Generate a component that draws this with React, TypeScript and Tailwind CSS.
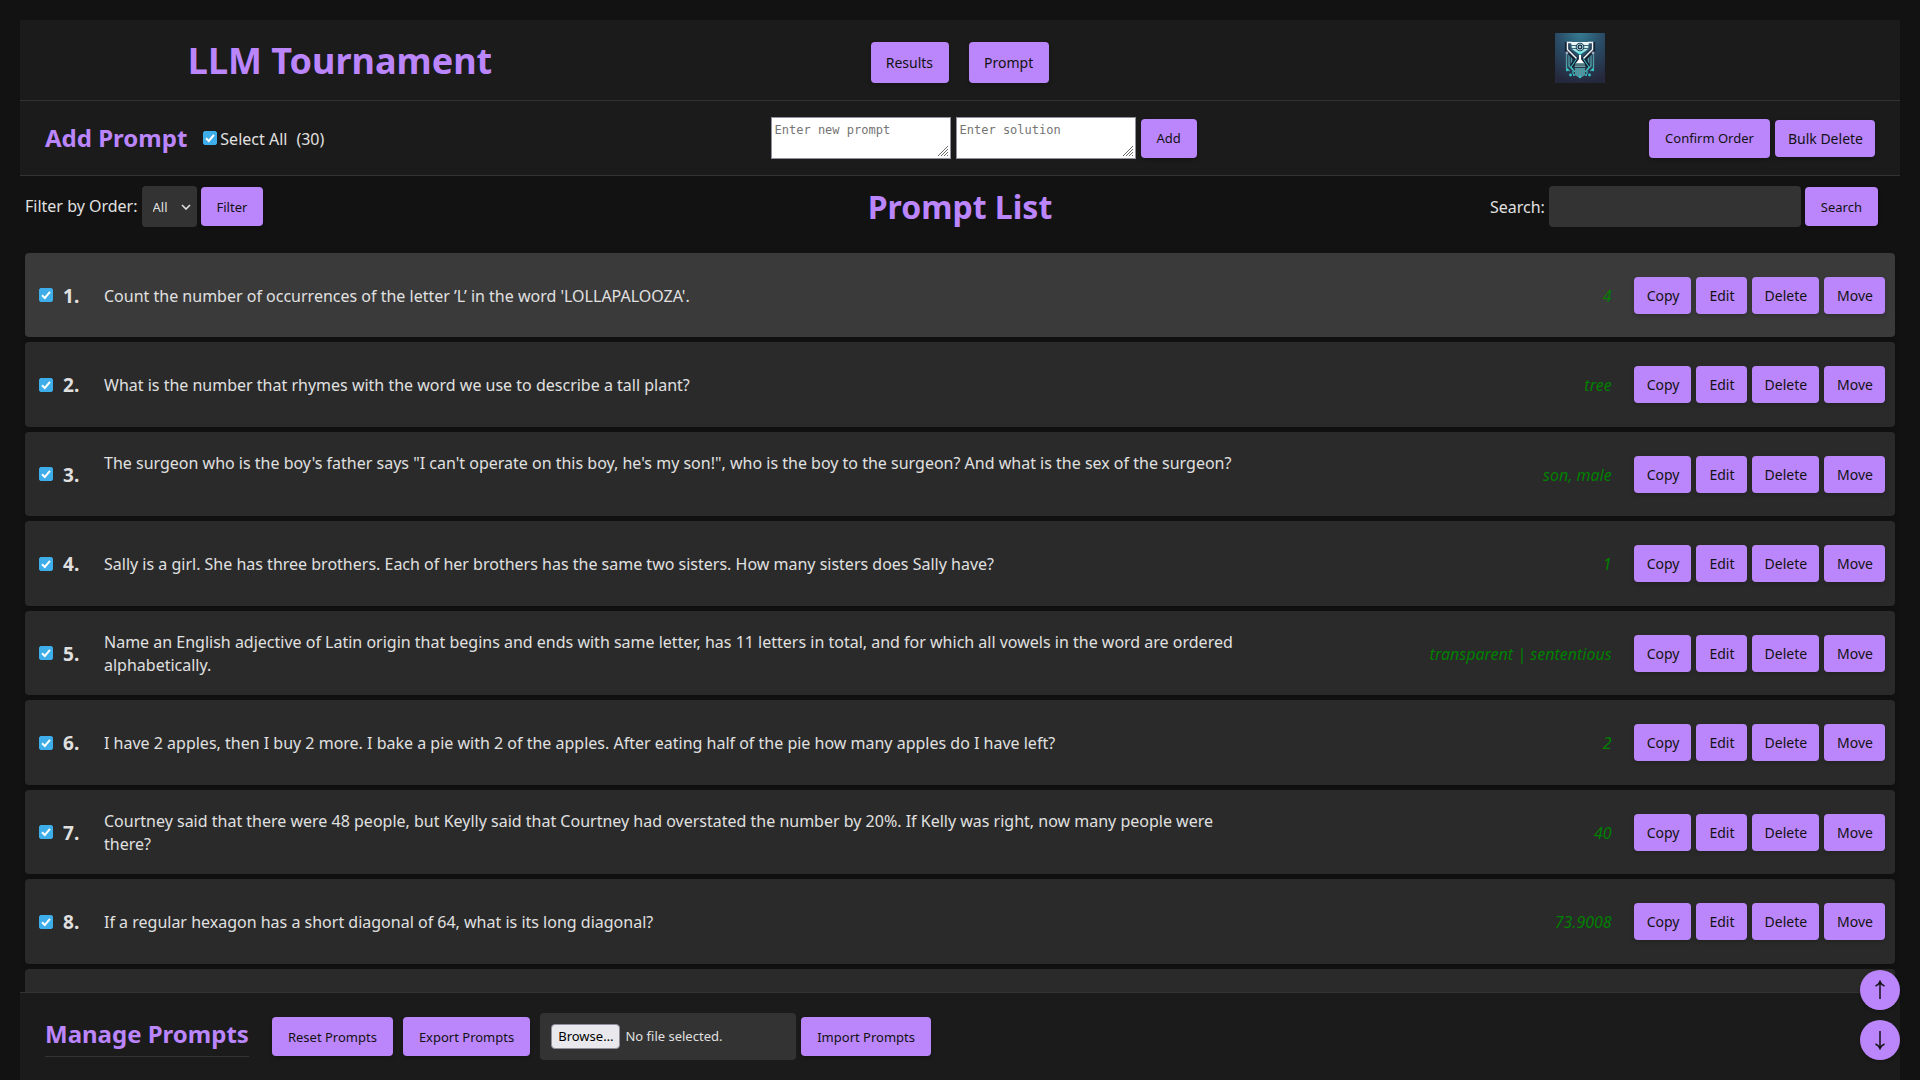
import React from "react";

type Prompt = { text: string; answer: string };

const prompts: Prompt[] = [
  { text: "Count the number of occurrences of the letter ’L’ in the word 'LOLLAPALOOZA'.", answer: "4" },
  { text: "What is the number that rhymes with the word we use to describe a tall plant?", answer: "tree" },
  {
    text: "The surgeon who is the boy's father says \"I can't operate on this boy, he's my son!\", who is the boy to the surgeon? And what is the sex of the surgeon?\n\u00a0",
    answer: "son, male",
  },
  {
    text: "Sally is a girl. She has three brothers. Each of her brothers has the same two sisters. How many sisters does Sally have?",
    answer: "1",
  },
  {
    text: "Name an English adjective of Latin origin that begins and ends with same letter, has 11 letters in total, and for which all vowels in the word are ordered alphabetically.",
    answer: "transparent | sententious",
  },
  {
    text: "I have 2 apples, then I buy 2 more. I bake a pie with 2 of the apples. After eating half of the pie how many apples do I have left?",
    answer: "2",
  },
  {
    text: "Courtney said that there were 48 people, but Keylly said that Courtney had overstated the number by 20%. If Kelly was right, now many people were there?",
    answer: "40",
  },
  { text: "If a regular hexagon has a short diagonal of 64, what is its long diagonal?", answer: "73.9008" },
];

const base =
  "rounded-[4px] bg-[#bb86fc] text-[#121212] whitespace-nowrap shadow-[0_2px_4px_rgba(0,0,0,0.2)] cursor-pointer";

function SmallButton({ children }: { children: React.ReactNode }) {
  return (
    <button type="button" className={`${base} h-[39px] px-4 pt-px text-[13px]`}>
      {children}
    </button>
  );
}

function RowButton({ children }: { children: React.ReactNode }) {
  return (
    <button type="button" className={`${base} h-[37px] pr-3 pl-[13px] text-[14px]`}>
      {children}
    </button>
  );
}

function NavLink({ children }: { children: React.ReactNode }) {
  return (
    <a href="#" className={`${base} flex h-[41px] items-center pr-4 pl-[15px] text-[14px]`}>
      {children}
    </a>
  );
}

function Checkbox({ id, label }: { id: string; label?: string }) {
  return (
    <span className="grid size-[14px] shrink-0">
      <input
        id={id}
        type="checkbox"
        defaultChecked
        aria-label={label}
        className="peer col-start-1 row-start-1 size-[14px] appearance-none rounded-[2px] border border-[#3daee9] checked:bg-[#3daee9]"
      />
      <svg
        viewBox="0 0 14 14"
        className="pointer-events-none col-start-1 row-start-1 hidden size-[14px] peer-checked:block"
        fill="none"
        stroke="#fff"
        strokeWidth="2"
      >
        <path d="M3 7.2 5.8 10 11 3.8" />
      </svg>
    </span>
  );
}

function Area({ placeholder }: { placeholder: string }) {
  return (
    <span className="grid">
      <textarea
        aria-label={placeholder}
        placeholder={placeholder}
        className="col-start-1 row-start-1 h-[42px] w-[180px] resize-none border border-[#8f8f9d] bg-white px-[3px] py-1 font-['DejaVu_Sans_Mono',monospace] text-[12px] leading-4 text-black placeholder:text-[#757575]"
      />
      <svg
        viewBox="0 0 12 12"
        className="pointer-events-none col-start-1 row-start-1 mr-[2px] mb-[2px] size-3 self-end justify-self-end"
        stroke="#6a6a6a"
        strokeWidth="1"
      >
        <path d="M1 11 11 1M4 11 11 4M7 11 11 7M10 11 11 10" />
      </svg>
    </span>
  );
}

function Logo() {
  return (
    <svg viewBox="0 0 50 50" className="size-[50px]" role="img" aria-label="LLM Tournament logo" fill="none">
      <defs>
        <radialGradient id="lg-bg" cx="25" cy="0" r="50" gradientUnits="userSpaceOnUse">
          <stop offset="0" stopColor="#357c92" />
          <stop offset="0.45" stopColor="#2a4c66" />
          <stop offset="1" stopColor="#25283c" />
        </radialGradient>
        <linearGradient id="lg-side" x1="0" y1="16" x2="0" y2="44" gradientUnits="userSpaceOnUse">
          <stop offset="0" stopColor="#5b7f92" />
          <stop offset="0.5" stopColor="#4f9fa2" />
          <stop offset="1" stopColor="#2fc0c2" />
        </linearGradient>
        <linearGradient id="lg-cup" x1="0" y1="9" x2="0" y2="23" gradientUnits="userSpaceOnUse">
          <stop offset="0" stopColor="#f4fbfb" />
          <stop offset="0.45" stopColor="#c4eeee" />
          <stop offset="1" stopColor="#25d5d8" />
        </linearGradient>
      </defs>
      <rect width="50" height="50" fill="url(#lg-bg)" />
      <path d="M11 6.5h6M33 6.5h6" stroke="#27607a" strokeWidth="2" />
      <path
        d="M11.500 21v14l3 3M14 22v11l4 4v4M16.500 24v7l-2 2M38.500 21v14l-3 3M36 22v11l-4 4v4M33.500 24v7l2 2"
        stroke="url(#lg-side)"
        strokeWidth="1.300"
      />
      <path d="M12 9v8l9.500 9.500-5 7M38 9v8l-9.500 9.500 5 7" stroke="#152436" strokeWidth="4.500" />
      <path d="M16 9h18l-1 7-8 6-8-6z" fill="url(#lg-cup)" />
      <path d="M16 12.500h18M17 15.500h16" stroke="#2b4258" strokeWidth="0.800" />
      <circle cx="25" cy="14" r="4.300" fill="#20384e" />
      <circle cx="25" cy="14" r="3" stroke="#9fd0d8" strokeWidth="1" />
      <circle cx="25" cy="14" r="1" fill="#d9f3f5" />
      <path d="M17 9.500h-4.500v7l9 9M33 9.500h4.500v7l-9 9" stroke="#f2f8fa" strokeWidth="1.500" />
      <path d="M21.500 26l-5.500 8 4 5M28.500 26l5.500 8-4 5" stroke="#3fc9cb" strokeWidth="1" />
      <path d="M24 22h2v4l3 4h-8l3-4z" fill="#fff" />
      <path d="M20.500 30h9l1 4h-11z" fill="#6b98a0" />
      <path d="M20 32h10" stroke="#38525f" />
      <path d="M20 35h10v7l-3 2h-4l-3-2z" fill="#5f8f99" />
      <path d="M21.500 35v7M23.500 35v9M26.500 35v9M28.500 35v7" stroke="#35a0a6" strokeWidth="0.800" />
      <g fill="#35c4c8">
        <circle cx="12" cy="37" r="1.200" />
        <circle cx="15.500" cy="42" r="1.400" />
        <circle cx="19" cy="42" r="1.100" />
        <circle cx="25" cy="44" r="1.300" />
        <circle cx="31" cy="42" r="1.100" />
        <circle cx="34.500" cy="42" r="1.400" />
        <circle cx="38" cy="37" r="1.200" />
      </g>
      <circle cx="12" cy="20" r="1.400" fill="#9aa9b8" />
      <circle cx="38" cy="20" r="1.400" fill="#9aa9b8" />
    </svg>
  );
}

function ScrollButton({ label, d }: { label: string; d: string }) {
  return (
    <button
      type="button"
      aria-label={label}
      className="grid size-10 place-items-center rounded-full bg-[#bb86fc] text-[#121212] shadow-[0_2px_4px_rgba(0,0,0,0.2)]"
    >
      <svg viewBox="0 0 12 20" className="h-5 w-3" fill="none" stroke="currentColor">
        <path d={d} strokeWidth="1.500" />
      </svg>
    </button>
  );
}

export default function App() {
  return (
    <div className="flex h-screen flex-col overflow-hidden bg-[#121212] px-5 pt-5 font-['Noto_Sans',sans-serif] text-[16px] leading-[23px] text-[#e0e0e0]">
      <header className="grid grid-cols-3 items-end justify-items-center border-b border-[#333] bg-[#1b1b1b] px-[10px] pt-[13px] pb-[17px]">
        <h1 className="text-[36px] leading-[44px] font-bold text-[#bb86fc]">LLM Tournament</h1>
        <nav className="flex gap-5">
          <NavLink>Results</NavLink>
          <NavLink>Prompt</NavLink>
        </nav>
        <Logo />
      </header>

      <section className="flex items-center justify-between border-b border-[#333] bg-[#1b1b1b] px-[25px] py-4">
        <div className="flex items-center">
          <h2 className="text-[24px] leading-8 font-bold text-[#bb86fc]">Add Prompt</h2>
          <span className="ml-4 flex items-center gap-[3px]">
            <Checkbox id="select-all" />
            <label htmlFor="select-all" className="pt-[2px]">
              Select All
            </label>
          </span>
          <span className="ml-[9px] pt-[2px]">(30)</span>
        </div>
        <form className="mr-[6px] flex items-center gap-[5px]">
          <Area placeholder="Enter new prompt" />
          <Area placeholder="Enter solution" />
          <SmallButton>Add</SmallButton>
        </form>
        <div className="flex items-center gap-[5px]">
          <SmallButton>Confirm Order</SmallButton>
          <RowButton>Bulk Delete</RowButton>
        </div>
      </section>

      <section className="grid grid-cols-[1fr_auto_1fr] items-center px-[5px] pt-[10px] pb-[26px]">
        <form className="flex items-center gap-1">
          <label htmlFor="order">Filter by Order:</label>
          <span className="grid">
            <select
              id="order"
              className="col-start-1 row-start-1 h-[41px] w-[55px] appearance-none rounded-[4px] bg-[#333] pt-px pl-[11px] text-[13px] text-[#e0e0e0]"
            >
              <option>All</option>
            </select>
            <svg
              viewBox="0 0 10 6"
              className="pointer-events-none col-start-1 row-start-1 mr-[6px] h-[6px] w-[10px] self-center justify-self-end"
              fill="none"
              stroke="#e0e0e0"
              strokeWidth="1.600"
            >
              <path d="M1 1 5 5 9 1" />
            </svg>
          </span>
          <SmallButton>Filter</SmallButton>
        </form>
        <h2 className="text-[32px] leading-[41px] font-bold text-[#bb86fc]">Prompt List</h2>
        <form className="flex items-center justify-end gap-1 pr-[17px]">
          <label htmlFor="search" className="pt-px">
            Search:
          </label>
          <input id="search" type="text" className="h-[41px] w-[252px] rounded-[4px] bg-[#333] px-[10px] text-[13px]" />
          <SmallButton>Search</SmallButton>
        </form>
      </section>

      <main className="min-h-0 flex-1 overflow-hidden px-[5px]">
        <ol className="flex flex-col gap-[5px]">
          {prompts.map((p, i) => (
            <li
              key={i}
              className="grid min-h-[84px] grid-cols-[24px_41px_3fr_1fr_auto] items-center rounded-[4px] bg-[#2a2a2a] pr-[10px] pl-[14px] shadow-[0_2px_4px_rgba(0,0,0,0.2)] first:bg-[#3a3a3a] even:min-h-[85px]"
            >
              <Checkbox id={`prompt-${i + 1}`} label={`Select prompt ${i + 1}`} />
              <span className="pt-[2px] text-[19px] font-bold">{i + 1}.</span>
              <p className="pt-[2px] whitespace-pre-line">{p.text}</p>
              <p className="pt-[2px] pr-[22px] text-right text-[#008000] italic">{p.answer}</p>
              <div className="flex gap-[5px]">
                <RowButton>Copy</RowButton>
                <RowButton>Edit</RowButton>
                <RowButton>Delete</RowButton>
                <RowButton>Move</RowButton>
              </div>
            </li>
          ))}
          <li className="min-h-[84px] rounded-[4px] bg-[#2a2a2a]" />
        </ol>
      </main>

      <footer className="flex items-center border-t border-[#333] bg-[#1b1b1b] px-[25px] pt-5 pb-5">
        <h2 className="mr-[23px] border-b border-[#333] pt-[2px] pb-[6px] text-[24px] leading-8 font-bold text-[#bb86fc]">
          Manage Prompts
        </h2>
        <div className="flex items-center gap-[10px]">
          <SmallButton>Reset Prompts</SmallButton>
          <SmallButton>Export Prompts</SmallButton>
          <form className="flex items-center gap-[5px]">
            <label className="flex h-[47px] w-[256px] items-center gap-[5px] rounded-[4px] bg-[#333] px-[11px] text-[13px]">
              <input type="file" className="sr-only" />
              <span className="rounded-[4px] border border-[#8f8f9d] bg-[#e9e9ed] px-[6px] text-black">Browse…</span>
              <span>No file selected.</span>
            </label>
            <SmallButton>Import Prompts</SmallButton>
          </form>
        </div>
      </footer>

      <div className="fixed right-5 bottom-5 flex flex-col gap-[10px]">
        <ScrollButton label="Scroll to top" d="M6 19V2M1.500 6Q5 4.500 6 1.500Q7 4.500 10.500 6" />
        <ScrollButton label="Scroll to bottom" d="M6 1V18M1.500 14Q5 15.500 6 18.500Q7 15.500 10.500 14" />
      </div>
    </div>
  );
}
